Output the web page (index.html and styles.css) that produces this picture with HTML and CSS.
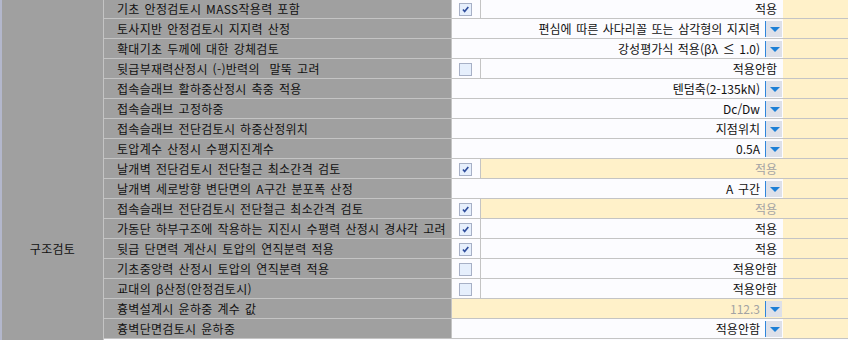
FILE: index.html
```html
<!DOCTYPE html>
<html lang="ko">
<head>
<meta charset="utf-8">
<link rel="stylesheet" href="styles.css">
</head>
<body>
<div class="grid">
  <div class="group"><div class="group-title">구조검토</div></div>
  <div class="rows">
    <div class="row"><div class="label">기초 안정검토시 MASS작용력 포함</div><div class="val"><div class="chk"><span class="box on"><svg viewBox="0 0 13 13"><path d="M3.5 6.5 L5.5 8.8 L9.8 3.6"/></svg></span></div><div class="text">적용</div></div><div class="extra"></div></div>
    <div class="row"><div class="label">토사지반 안정검토시 지지력 산정</div><div class="val"><div class="text">편심에 따른 사다리꼴 또는 삼각형의 지지력</div><div class="dd"><i></i></div></div><div class="extra"></div></div>
    <div class="row"><div class="label">확대기초 두께에 대한 강체검토</div><div class="val"><div class="text">강성평가식 적용(βλ ≤ 1.0)</div><div class="dd"><i></i></div></div><div class="extra"></div></div>
    <div class="row"><div class="label">뒷급부재력산정시 (-)반력의&nbsp; 말뚝 고려</div><div class="val"><div class="chk"><span class="box"></span></div><div class="text">적용안함</div></div><div class="extra"></div></div>
    <div class="row"><div class="label">접속슬래브 활하중산정시 축중 적용</div><div class="val"><div class="text">텐덤축(2-135kN)</div><div class="dd"><i></i></div></div><div class="extra"></div></div>
    <div class="row"><div class="label">접속슬래브 고정하중</div><div class="val"><div class="text">Dc/Dw</div><div class="dd"><i></i></div></div><div class="extra"></div></div>
    <div class="row"><div class="label">접속슬래브 전단검토시 하중산정위치</div><div class="val"><div class="text">지점위치</div><div class="dd"><i></i></div></div><div class="extra"></div></div>
    <div class="row"><div class="label">토압계수 산정시 수평지진계수</div><div class="val"><div class="text">0.5A</div><div class="dd"><i></i></div></div><div class="extra"></div></div>
    <div class="row"><div class="label">날개벽 전단검토시 전단철근 최소간격 검토</div><div class="val"><div class="chk"><span class="box on"><svg viewBox="0 0 13 13"><path d="M3.5 6.5 L5.5 8.8 L9.8 3.6"/></svg></span></div><div class="text disabled">적용</div></div><div class="extra"></div></div>
    <div class="row"><div class="label">날개벽 세로방향 변단면의 A구간 분포폭 산정</div><div class="val"><div class="text">A 구간</div><div class="dd"><i></i></div></div><div class="extra"></div></div>
    <div class="row"><div class="label">접속슬래브 전단검토시 전단철근 최소간격 검토</div><div class="val"><div class="chk"><span class="box on"><svg viewBox="0 0 13 13"><path d="M3.5 6.5 L5.5 8.8 L9.8 3.6"/></svg></span></div><div class="text disabled">적용</div></div><div class="extra"></div></div>
    <div class="row"><div class="label">가동단 하부구조에 작용하는 지진시 수평력 산정시 경사각 고려</div><div class="val"><div class="chk"><span class="box on"><svg viewBox="0 0 13 13"><path d="M3.5 6.5 L5.5 8.8 L9.8 3.6"/></svg></span></div><div class="text">적용</div></div><div class="extra"></div></div>
    <div class="row"><div class="label">뒷급 단면력 계산시 토압의 연직분력 적용</div><div class="val"><div class="chk"><span class="box on"><svg viewBox="0 0 13 13"><path d="M3.5 6.5 L5.5 8.8 L9.8 3.6"/></svg></span></div><div class="text">적용</div></div><div class="extra"></div></div>
    <div class="row"><div class="label">기초중앙력 산정시 토압의 연직분력 적용</div><div class="val"><div class="chk"><span class="box"></span></div><div class="text">적용안함</div></div><div class="extra"></div></div>
    <div class="row"><div class="label">교대의 β산정(안정검토시)</div><div class="val"><div class="chk"><span class="box"></span></div><div class="text">적용안함</div></div><div class="extra"></div></div>
    <div class="row"><div class="label">흉벽설계시 윤하중 계수 값</div><div class="val yellow"><div class="text disabled">112.3</div><div class="dd"><i></i></div></div><div class="extra"></div></div>
    <div class="row"><div class="label">흉벽단면검토시 윤하중</div><div class="val"><div class="text">적용안함</div><div class="dd"><i></i></div></div><div class="extra"></div></div>
  </div>
</div>
</body>
</html>
```

FILE: styles.css
```css
html, body {
  margin: 0;
  padding: 0;
  width: 848px;
  height: 340px;
  overflow: hidden;
  background: #fcfcff;
  font-family: "Noto Sans CJK KR", "Noto Sans", sans-serif;
  font-size: 12px;
  word-spacing: 1.2px;
  color: #111;
}

.grid {
  display: flex;
  margin-top: -1px;
  height: 341px;
}

.group {
  width: 101px;
  flex: none;
  background: #a0a0a0;
  border-left: 2px solid #b3b7cc;
  border-right: 1px solid #c4c4c4;
  display: flex;
  flex-direction: column;
  align-items: center;
}

.group-title {
  margin-top: 240px;
  line-height: 20px;
  letter-spacing: 0.3px;
}

.rows {
  flex: 1;
  display: flex;
  flex-direction: column;
}

.row {
  display: flex;
  height: 19px;
  border-bottom: 1px solid #c4c4c4;
}

.label {
  width: 334px;
  flex: none;
  padding-left: 13px;
  background: #a0a0a0;
  border-right: 1px solid #c4c4c4;
  line-height: 20px;
  letter-spacing: 0.3px;
  white-space: nowrap;
  overflow: hidden;
}

.val {
  width: 331px;
  flex: none;
  display: flex;
  align-items: stretch;
  background: #fcfcff;
}

.val.yellow {
  background: #fff1c9;
}

.chk {
  width: 29px;
  flex: none;
  border-right: 1px solid #c4c4c4;
  background: #fcfcff;
  display: flex;
  align-items: center;
  padding-left: 7px;
  box-sizing: border-box;
}

.box {
  width: 11px;
  height: 11px;
  margin-top: 1px;
  border: 1px solid #a7b0c6;
  background: #e6effc;
  display: block;
}

.box svg {
  width: 11px;
  height: 11px;
  display: block;
}

.box svg path {
  fill: none;
  stroke: #2f4d9c;
  stroke-width: 2;
}

.text {
  flex: 1;
  text-align: right;
  line-height: 20px;
  padding-right: 6px;
  white-space: nowrap;
  overflow: hidden;
}

.chk + .text.disabled {
  background: #fff1c9;
}

.text.disabled {
  color: #a3a3a3;
}

.text:has(+ .dd) {
  padding-right: 5px;
}

.dd {
  width: 17px;
  flex: none;
  margin: 2px 1px 1px 0;
  background: #dde0e9;
  border-left: 1px solid #2f86dc;
  box-sizing: border-box;
  display: flex;
  align-items: center;
  justify-content: center;
}

.dd i {
  display: block;
  width: 0;
  height: 0;
  border-left: 5px solid transparent;
  border-right: 5px solid transparent;
  border-top: 5px solid #1c7fd6;
  margin-left: 1px;
}

.extra {
  flex: 1;
  background: #fff1c9;
}
```
